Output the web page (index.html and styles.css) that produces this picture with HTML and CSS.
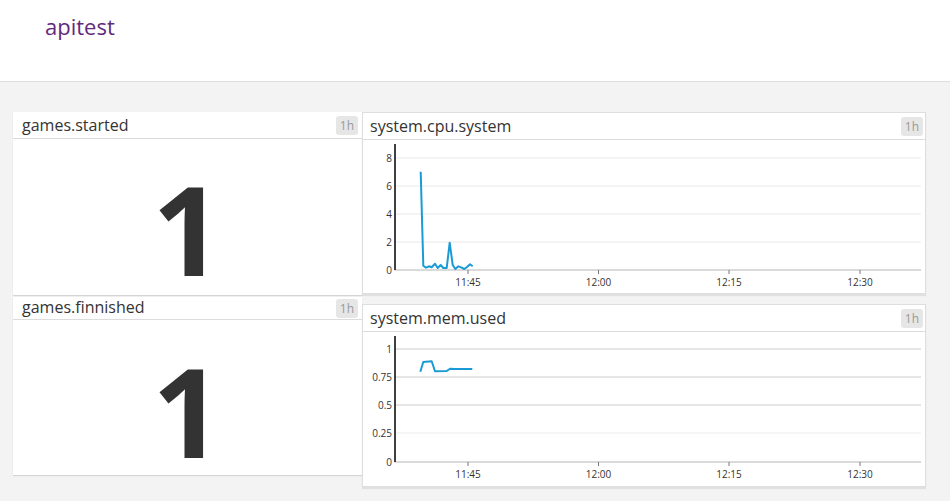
FILE: index.html
```html
<!DOCTYPE html>
<html lang="en">
<head>
<meta charset="utf-8">
<title>apitest</title>
<link rel="stylesheet" href="styles.css">
</head>
<body>
<header class="top">
  <h1 class="title">apitest</h1>
</header>
<main class="board">
  <div class="col-left">
    <section class="panel qv">
      <div class="panel-head">
        <span class="panel-title">games.started</span>
        <span class="badge">1h</span>
      </div>
      <div class="qv-body"><span class="qv-value">1</span></div>
    </section>
    <section class="panel qv second">
      <div class="panel-head">
        <span class="panel-title">games.finnished</span>
        <span class="badge">1h</span>
      </div>
      <div class="qv-body"><span class="qv-value">1</span></div>
    </section>
  </div>
  <div class="col-right">
    <section class="panel ts">
      <div class="panel-head">
        <span class="panel-title">system.cpu.system</span>
        <span class="badge">1h</span>
      </div>
      <svg class="chart" width="562" height="153" viewBox="363 140 562 153">
        <g class="grid-soft">
          <line x1="395" y1="158" x2="921" y2="158"/>
          <line x1="395" y1="186" x2="921" y2="186"/>
          <line x1="395" y1="214" x2="921" y2="214"/>
          <line x1="395" y1="242" x2="921" y2="242"/>
        </g>
        <line class="xaxis" x1="395" y1="270" x2="921" y2="270"/>
        <g class="ticks">
          <line x1="468" y1="270" x2="468" y2="274"/>
          <line x1="598.5" y1="270" x2="598.5" y2="274"/>
          <line x1="729" y1="270" x2="729" y2="274"/>
          <line x1="860" y1="270" x2="860" y2="274"/>
        </g>
        <line class="yaxis" x1="395" y1="144" x2="395" y2="270"/>
        <g class="ylab">
          <text x="392" y="161.5">8</text>
          <text x="392" y="189.5">6</text>
          <text x="392" y="217.5">4</text>
          <text x="392" y="245.5">2</text>
          <text x="392" y="273.5">0</text>
        </g>
        <g class="xlab">
          <text x="468" y="286">11:45</text>
          <text x="598.5" y="286">12:00</text>
          <text x="729" y="286">12:15</text>
          <text x="860" y="286">12:30</text>
        </g>
        <polyline class="series" points="420.7,171.7 423.3,265.7 426,267.7 429,266.3 431.7,267.3 435,263.7 437.7,268 440.7,265 443.3,268 446.7,268 449.7,242.7 452.7,265 455.3,269 458.3,266.3 461.7,267.7 464.3,269 467.3,266.7 470,264.3 472.7,266.3"/>
      </svg>
    </section>
    <section class="panel ts">
      <div class="panel-head">
        <span class="panel-title">system.mem.used</span>
        <span class="badge">1h</span>
      </div>
      <svg class="chart" width="562" height="154" viewBox="363 332 562 154">
        <g class="grid-hard">
          <line x1="395" y1="349" x2="921" y2="349"/>
          <line x1="395" y1="377" x2="921" y2="377"/>
          <line x1="395" y1="405" x2="921" y2="405"/>
        </g>
        <line class="grid-soft-line" x1="395" y1="433" x2="921" y2="433"/>
        <line class="xaxis" x1="395" y1="462" x2="921" y2="462"/>
        <g class="ticks">
          <line x1="468" y1="462" x2="468" y2="466"/>
          <line x1="598.5" y1="462" x2="598.5" y2="466"/>
          <line x1="729" y1="462" x2="729" y2="466"/>
          <line x1="860" y1="462" x2="860" y2="466"/>
        </g>
        <line class="yaxis" x1="395" y1="336" x2="395" y2="462"/>
        <g class="ylab">
          <text x="392" y="352.5">1</text>
          <text x="392" y="380.5">0.75</text>
          <text x="392" y="408.5">0.5</text>
          <text x="392" y="436.5">0.25</text>
          <text x="392" y="465.5">0</text>
        </g>
        <g class="xlab">
          <text x="468" y="478">11:45</text>
          <text x="598.5" y="478">12:00</text>
          <text x="729" y="478">12:15</text>
          <text x="860" y="478">12:30</text>
        </g>
        <polyline class="series" points="420.3,371.7 423.3,362 431.7,361.3 435,371.3 446.7,371 450,368.7 455,369 472.3,369"/>
      </svg>
    </section>
  </div>
</main>
</body>
</html>
```
FILE: styles.css
```css
* { box-sizing: border-box; }

html, body {
  margin: 0;
  padding: 0;
}

body {
  background: #f3f3f3;
  font-family: "Open Sans", "Noto Sans", sans-serif;
  color: #333;
  width: 950px;
  height: 501px;
  overflow: hidden;
}

.top {
  height: 82px;
  background: #fff;
  border-bottom: 1px solid #dedede;
  padding: 11px 0 0 45px;
}

.title {
  margin: 0;
  font-size: 22px;
  font-weight: 400;
  line-height: 30px;
  color: #622a7c;
}

.board {
  display: flex;
  align-items: flex-start;
  padding: 30px 0 0 13px;
}

.col-left {
  width: 349px;
  display: flex;
  flex-direction: column;
}

.col-right {
  width: 564px;
  display: flex;
  flex-direction: column;
}

.panel {
  background: #fff;
  box-shadow: 0 1px 1px rgba(0, 0, 0, 0.12);
}

.panel-head {
  display: flex;
  align-items: center;
  justify-content: space-between;
  height: 27px;
  border-bottom: 1px solid #dcdcdc;
  padding: 0 4px 0 9px;
}

.panel-title {
  font-size: 16px;
  color: #333;
  white-space: nowrap;
}

.badge {
  font-size: 12px;
  line-height: 19px;
  height: 19px;
  padding: 0 4px;
  border-radius: 3px;
  background: #e6e6e6;
  color: #9a9a9a;
}

.qv {
  height: 183px;
}

.qv.second {
  margin-top: 2px;
  height: 178px;
}

.qv.second .panel-head {
  height: 23px;
}

.qv.second .panel-title {
  margin-top: -3px;
}

.qv-body {
  display: flex;
  justify-content: center;
  height: 155px;
  padding-top: 28px;
}

.qv.second .qv-body {
  padding-top: 29px;
}

.qv-value {
  font-size: 123px;
  font-weight: 700;
  line-height: 1;
  color: #333;
}

.ts {
  border: 1px solid #dedede;
  box-shadow: 0 2px 1px rgba(0, 0, 0, 0.08);
}

.ts + .ts {
  margin-top: 10px;
}

.ts .panel-head {
  height: 27px;
  padding: 0 2px 0 7px;
}

.chart {
  display: block;
}

.grid-soft line {
  stroke: #f0f0f0;
  stroke-width: 1.5;
}

.grid-hard line {
  stroke: #cccccc;
  stroke-width: 1;
}

.grid-soft-line {
  stroke: #ececec;
  stroke-width: 1;
}

.xaxis {
  stroke: #b5b5b5;
  stroke-width: 1;
}

.yaxis {
  stroke: #000;
  stroke-width: 1.5;
}

.ticks line {
  stroke: #777;
  stroke-width: 1;
}

.ylab text {
  font-family: "Open Sans", "Noto Sans", sans-serif;
  font-size: 10px;
  fill: #333;
  text-anchor: end;
}

.xlab text {
  font-family: "Open Sans", "Noto Sans", sans-serif;
  font-size: 10px;
  fill: #333;
  text-anchor: middle;
}

.series {
  fill: none;
  stroke: #1a9bd5;
  stroke-width: 2;
  stroke-linejoin: round;
}
```
